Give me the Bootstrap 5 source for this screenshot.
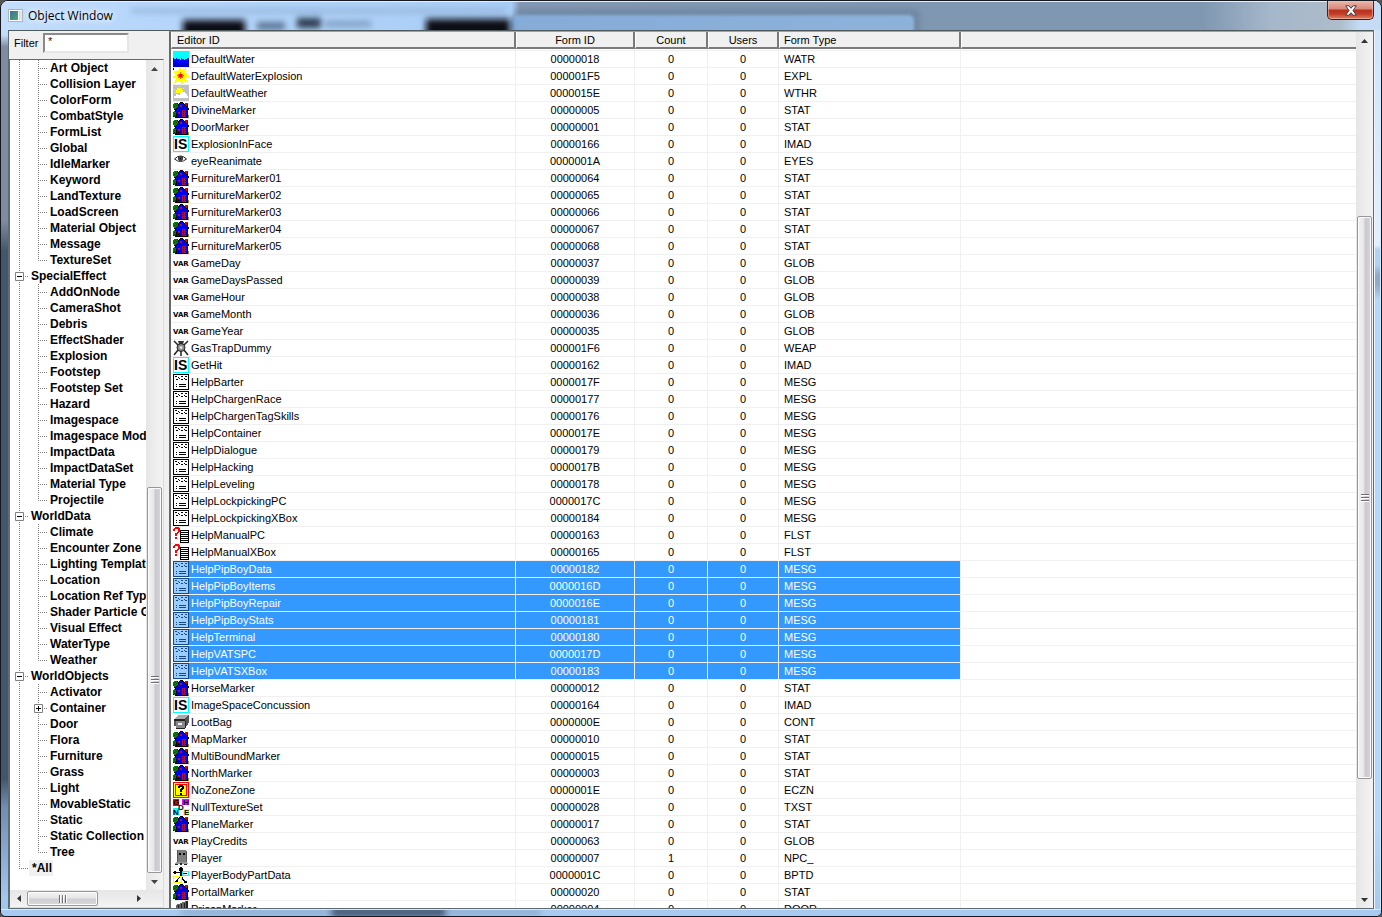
<!DOCTYPE html>
<html lang="en">
<head>
<meta charset="utf-8">
<meta name="viewport" content="width=device-width, initial-scale=1">
<title>Object Window</title>
<link href="https://cdn.jsdelivr.net/npm/bootstrap@5.3.0/dist/css/bootstrap.min.css" rel="stylesheet">
<style>
  :root { --face:#f0f0f0; --line:#f0f0f0; --sel:#3399ff; }
  body { background:#555; font:11px/16px "Liberation Sans", Arial, sans-serif; color:#000; overflow:hidden; }
  .win { border:1px solid #15181f; border-radius:8px 8px 6px 6px; padding:0 7px 7px; overflow:hidden; position:relative;
    background:linear-gradient(to bottom, #c3ddf9 0 34px, #7e8ba0 46px 220px, #44566c 250px 85%, #6e8db0 88%, #a3c6ec 98%); }
  .glass { left:0; width:100%; pointer-events:none; }
  .glass-top { top:0; height:29px; }
  .glass-bottom { bottom:0; height:7px; }
  .edge-right { right:0; top:29px; bottom:0; width:7px; border-left:1px solid #eef6ff; border-right:1px solid #d5eaff;
    background:linear-gradient(#cfe4fb 0, #e4effb 215px, #b0d0f4 220px 235px, #8fabc9 245px 255px, #b5d7fb 270px, #b5d7fb 90%, #a6c8ea); }
  .titlebar { height:29px; }
  .titlebar h1 { font:12px/14px "Open Sans", "Noto Sans", sans-serif; text-shadow:0 0 6px #fff, 0 0 8px #fff; }
  .close-btn { width:47px; height:19px; border:1px solid #4a1a1c; border-top:0; border-radius:0 0 5px 5px; padding:0;
    background:linear-gradient(#eab6aa 0, #d98878 8px, #b8301f 9px, #c43d25 13px, #dd8463); box-shadow:inset 0 0 0 1px #f3c9be88; }
  .client { border:1px solid #5f6b73; border-top-color:#4f5a5c; background:var(--face); }
  .side { width:160px; }
  .filter-row { height:28px; padding:2px 0 0 5px; }
  .filter-row label { width:29px; margin-top:2px; }
  .filter-row input { width:86px; height:20px; padding:0 3px 4px; border:2px solid; border-color:#8a8a8a #e6e6e6 #e6e6e6 #8a8a8a; border-radius:0;
    font:inherit; line-height:12px; background:#fff; min-height:0; }
  .tree-box { width:155px; border:1px solid; border-color:#696969 #dcdcdc #dcdcdc #696969; background:#fff; }
  .tree { font:bold 12px/16px "Liberation Sans", Arial, sans-serif; }
  .tree li { height:16px; white-space:nowrap; }
  .tree a { color:#000; text-decoration:none; }
  .cellv { flex:none; height:16px; background-repeat:no-repeat; --d:#808080 0 1px, transparent 1px 2px; }
  .lv1 { width:19px; }
  .lv2 { width:21px; }
  .bar-v { background-image:repeating-linear-gradient(to bottom, var(--d)); background-position:9px 0; background-size:1px 16px; }
  .bar-t { background-image:repeating-linear-gradient(to bottom, var(--d)), repeating-linear-gradient(to right, var(--d));
    background-position:9px 0, 9px 8px; background-size:1px 16px, 9px 1px; }
  .bar-e { background-image:repeating-linear-gradient(to bottom, var(--d)), repeating-linear-gradient(to right, var(--d));
    background-position:9px 0, 9px 8px; background-size:1px 8px, 9px 1px; }
  .twist { display:block; width:9px; height:9px; margin:4px 0 0 5px; padding:0; border:0; background:#fff; line-height:0; }
  .all-item { background:var(--face); padding:0 1px 0 3px; }
  .head-label { padding-left:2px; }
  .sb { background:linear-gradient(to right, #e6e6e6, #f3f3f3); flex:none; }
  .sb-v { width:17px; }
  .sb-h { height:17px; background:linear-gradient(#e6e6e6, #f3f3f3); }
  .sb button { border:0; padding:0; background:none; width:17px; height:17px; line-height:0; flex:none; }
  .thumb { border:1px solid #979797; border-radius:2px; box-shadow:inset 0 0 0 1px #fbfbfb; }
  .sb-v .thumb { width:15px; background:linear-gradient(to right, #f3f3f3 0, #e6e6e8 45%, #c9c9cd 55%, #d6d6da); }
  .sb-h .thumb { height:15px; background:linear-gradient(#f3f3f3 0, #e6e6e8 45%, #cfcfd2 55%, #dadadd); width:71px; }
  .grip { width:8px; height:8px; background:repeating-linear-gradient(#6f6f74 0 1px, #fff 1px 2px, transparent 2px 3px); }
  .sb-h .grip { background:repeating-linear-gradient(to right, #6f6f74 0 1px, #fff 1px 2px, transparent 2px 3px); }
  .list-box { border-left:2px solid #696969; border-top:1px solid #a0a0a0; background:#fff; }
  .objects { table-layout:fixed; border-collapse:separate; border-spacing:0; color:#000; font-size:11px; }
  .objects.table > thead > tr > th { height:17px; padding:0 0 0 5px; line-height:14px; padding-top:1px; font-weight:400; background:var(--face); vertical-align:top; box-shadow:none;
    border:solid; border-width:0 2px 2px 1px; border-color:#fff #7a7a7a #7a7a7a #fff; }
  .objects.table > thead > tr > th.text-center { padding-left:0; }
  .objects.table > thead > tr > th.kind-head { padding-left:4px; }
  .objects.table > tbody > tr > td { height:17px; padding:0; line-height:16px; border:0 solid var(--line); border-width:0 1px 1px 0; white-space:nowrap; box-shadow:none; background:#fff; vertical-align:top; color:#000; }
  .objects.table > tbody > tr > td:last-child, .objects.table > thead > tr > th:last-child { border-right:0; }
  .objects.table > tbody > tr > td.kind { padding-left:5px; }
  .objects.table > tbody > tr.sliver > td { height:2px; line-height:0; }
  .objects.table > tbody > tr.picked > td { background:var(--sel); color:#fff; }
  .objects.table > tbody > tr.picked > td:first-child { background:linear-gradient(to right, #fff 2px, var(--sel) 2px); }
  .objects.table > tbody > tr.picked > td:last-child { background:#fff; }
  .objects .ico { width:16px; height:16px; margin:0 2px; flex:none; }
  .objects .name { height:16px; }
  .now-focused .name > span { flex:1; background:repeating-linear-gradient(to right, #cc6600 0 1px, transparent 1px 2px) 0 0 / 100% 1px no-repeat; }
  svg { display:block; }
  svg text { font-family:"Liberation Sans", Arial, sans-serif; font-weight:700; }
  svg .wide { font-family:"DejaVu Sans", sans-serif; }
</style>
</head>
<body>
<div class="win vh-100 d-flex flex-column">
  <svg class="glass glass-top position-absolute" viewBox="0 0 1380 29" preserveAspectRatio="none" aria-hidden="true">
    <defs>
      <filter id="soft" x="-20%" y="-60%" width="140%" height="220%"><feGaussianBlur stdDeviation="3"/></filter>
      <filter id="haze" x="-20%" y="-60%" width="140%" height="220%"><feGaussianBlur stdDeviation="1.500"/></filter>
      <linearGradient id="sky"><stop offset="0" stop-color="#c4defa"/><stop offset=".1" stop-color="#b6d6fa"/><stop offset=".37" stop-color="#a9cdf6"/><stop offset=".376" stop-color="#8498b2"/><stop offset=".65" stop-color="#7f97b1"/><stop offset=".87" stop-color="#7f97b1"/><stop offset=".92" stop-color="#a5b7ca"/><stop offset=".97" stop-color="#aebccb"/><stop offset=".985" stop-color="#c4dcf5"/></linearGradient>
      <linearGradient id="pane"><stop offset="0" stop-color="#84acd8"/><stop offset="1" stop-color="#8db2da"/></linearGradient>
    </defs>
    <rect width="1380" height="29" fill="url(#sky)"/>
    <g filter="url(#soft)">
      <rect x="130" y="8" width="375" height="4" fill="#93b2d8"/>
      <rect x="514" y="8" width="405" height="34" rx="6" fill="#6f87a3"/>
    </g>
    <rect x="510" y="14" width="403" height="28" rx="5" fill="url(#pane)" filter="url(#haze)"/>
    <g filter="url(#soft)">
      <rect x="182" y="19" width="62" height="20" fill="#0b1017"/>
      <rect x="425" y="18" width="84" height="20" fill="#0b1017"/>
      <rect x="256" y="21" width="28" height="8" fill="#5b7594"/>
      <rect x="296" y="17" width="24" height="10" fill="#2c3b4e"/>
      <rect x="324" y="20" width="46" height="6" fill="#7f9cc0"/>
    </g>
    <path d="M0 .5H1380" stroke="#e4f0fc"/>
  </svg>
  <div class="edge-right position-absolute"></div>
  <svg class="glass glass-bottom position-absolute" viewBox="0 0 1380 7" preserveAspectRatio="none" aria-hidden="true">
    <rect width="1380" height="7" fill="#a9caf0"/>
    <g filter="url(#soft)"><rect x="180" y="0" width="360" height="7" fill="#8fadd2"/><rect x="330" y="-3" width="115" height="12" fill="#4a5f7b"/></g>
    <path d="M0 .5H1380" stroke="#d8e9fb"/>
  </svg>

  <header class="titlebar d-flex align-items-start position-relative flex-shrink-0">
    <svg class="mt-2" width="16" height="13" viewBox="0 0 16 13" aria-hidden="true">
      <defs><linearGradient id="scr" x1="0" y1="0" x2="1" y2="1"><stop offset="0" stop-color="#3a6f9e"/><stop offset="1" stop-color="#4fa86a"/></linearGradient></defs>
      <rect x=".5" y=".5" width="14" height="12" fill="#fff" stroke="#a9b4bd"/><rect x="2" y="2" width="8" height="9" fill="url(#scr)"/><path d="M11.500 2V11M13 2V11" stroke="#c9d2da"/>
    </svg>
    <h1 class="m-0 mt-2 ms-1 flex-grow-1">Object Window</h1>
    <button class="close-btn" type="button" aria-label="Close">
      <svg class="mx-auto" width="12" height="11" viewBox="0 0 12 11"><path d="M.7.8H4L6 3.300 8 .8H11.300L8 5.500 11.300 10.200H8L6 7.700 4 10.200H.7L4 5.500Z" fill="#fff" stroke="#4b3a45"/></svg>
    </button>
  </header>

  <main class="client d-flex flex-grow-1 position-relative overflow-hidden">
    <aside class="side d-flex flex-column flex-shrink-0">
      <div class="filter-row d-flex align-items-start flex-shrink-0">
        <label for="filter">Filter</label>
        <input class="form-control" id="filter" type="text" value="*">
      </div>
      <div class="tree-box d-flex flex-column flex-grow-1 overflow-hidden">
        <div class="d-flex flex-grow-1 overflow-hidden">
          <ul class="tree list-unstyled mb-0 flex-grow-1 overflow-hidden" id="tree"></ul>
          <div class="sb sb-v d-flex flex-column align-items-center">
            <button type="button" aria-label="Scroll tree up"><svg class="m-auto" width="7" height="4"><path d="M0 4L3.500 0 7 4Z" fill="#444"/></svg></button>
            <div style="flex-grow:414"></div>
            <div class="thumb d-flex align-items-center justify-content-center" style="flex-grow:379"><span class="grip"></span></div>
            <div></div>
            <button type="button" aria-label="Scroll tree down"><svg class="m-auto" width="7" height="4"><path d="M0 0H7L3.500 4Z" fill="#444"/></svg></button>
          </div>
        </div>
        <div class="sb sb-h d-flex align-items-center">
          <button type="button" aria-label="Scroll tree left"><svg class="m-auto" width="4" height="7"><path d="M4 0V7L0 3.500Z" fill="#333"/></svg></button>
          <div class="thumb d-flex align-items-center justify-content-center"><span class="grip"></span></div>
          <div class="flex-grow-1"></div>
          <button type="button" aria-label="Scroll tree right"><svg class="m-auto" width="4" height="7"><path d="M0 0V7L4 3.500Z" fill="#333"/></svg></button>
          <div class="pe-3"></div>
        </div>
      </div>
    </aside>

    <section class="list-box d-flex flex-grow-1 overflow-hidden">
      <div class="flex-grow-1 overflow-hidden">
        <table class="table objects mb-0 w-100">
          <colgroup><col style="width:345px"><col style="width:119px"><col style="width:73px"><col style="width:71px"><col style="width:182px"><col></colgroup>
          <thead><tr><th scope="col">Editor ID</th><th scope="col" class="text-center">Form ID</th><th scope="col" class="text-center">Count</th><th scope="col" class="text-center">Users</th><th scope="col" class="kind-head">Form Type</th><th aria-hidden="true"></th></tr></thead>
          <tbody id="rows"></tbody>
        </table>
      </div>
      <div class="sb sb-v d-flex flex-column align-items-center">
        <button type="button" aria-label="Scroll list up"><svg class="m-auto" width="7" height="4"><path d="M0 4L3.500 0 7 4Z" fill="#333"/></svg></button>
        <div style="flex-grow:169"></div>
        <div class="thumb d-flex align-items-center justify-content-center" style="flex-grow:559"><span class="grip"></span></div>
        <div style="flex-grow:113"></div>
        <button type="button" aria-label="Scroll list down"><svg class="m-auto" width="7" height="4"><path d="M0 0H7L3.500 4Z" fill="#333"/></svg></button>
      </div>
    </section>
  </main>
</div>

<script>
  // Category tree: each group lists its children, "+" marks a collapsed child
  const groups = [
    ['', 'Art Object|Collision Layer|ColorForm|CombatStyle|FormList|Global|IdleMarker|Keyword|LandTexture|LoadScreen|Material Object|Message|TextureSet'],
    ['SpecialEffect', 'AddOnNode|CameraShot|Debris|EffectShader|Explosion|Footstep|Footstep Set|Hazard|Imagespace|Imagespace Modifier|ImpactData|ImpactDataSet|Material Type|Projectile'],
    ['WorldData', 'Climate|Encounter Zone|Lighting Template|Location|Location Ref Type|Shader Particle Geometry|Visual Effect|WaterType|Weather'],
    ['WorldObjects', 'Activator|+Container|Door|Flora|Furniture|Grass|Light|MovableStatic|Static|Static Collection|Tree']
  ];
  const twist = open => `<button class="twist" type="button" aria-label="${open ? 'Collapse' : 'Expand'}"><svg width="9" height="9"><path d="M.5.5H8.500V8.500H.5Z" fill="#fff" stroke="#808080"/><path d="M2 4.500H7${open ? '' : 'M4.500 2V7'}" stroke="#000"/></svg></button>`;
  let tree = '';
  for (const [title, kids] of groups) {
    if (title) tree += `<li class="d-flex"><span class="cellv lv1 bar-t">${twist(true)}</span><a href="#" class="head-label">${title}</a></li>`;
    kids.split('|').forEach((kid, i, all) => {
      const shut = kid[0] === '+', end = i === all.length - 1;
      tree += `<li class="d-flex"><span class="cellv lv1 bar-v"></span><span class="cellv lv2 ${end ? 'bar-e' : 'bar-t'}">${shut ? twist(false) : ''}</span><a href="#">${kid.replace('+', '')}</a></li>`;
    });
  }
  tree += '<li class="d-flex"><span class="cellv lv1 bar-e"></span><a href="#" class="all-item">*All</a></li>';
  document.getElementById('tree').innerHTML = tree;

  // Turns rows of colour letters into 1 x 1 cells
  const palette = { k: '#000', g: '#008000', G: '#064a06', b: '#0000f0', r: '#e00000', m: '#a8103c', y: '#a09000' };
  const pixels = rows => rows.flatMap((row, y) => [...row].map((c, x) => c === '.' ? '' : `<path d="M${x} ${y}h1v1h-1Z" fill="${palette[c]}"/>`)).join('');

  // 16 x 16 type icons
  const note = (ink, paper) => `<path d="M.5.500H15.500V15.500H.5Z" fill="${paper}" stroke="${ink}"/><path d="M2 2.500H4M5 3.500H6M8 2.500H10M12 2.500H14M3 5.500H5M6 4.500H7M8 5.500H10M11 4.500H12M12 5.500H14M3 10.500H4M6 10.500H13M3 12.500H4M6 12.500H13" stroke="${ink}"/>`;
  const icons = {
    water: '<path d="M0 0H16V16H0Z" fill="#0ff"/><path d="M0 7H1V8H3V7H4V8H7V9H8V7H9V8H11V9H12V8H14V7H16V16H0Z" fill="#00f"/><path d="M0 12H16V16H0Z" fill="#0000d0"/>',
    burst: '<path d="M0 0H1V2H0Z"/><path d="M7 0L8 4 12 1 11 5 15 5 12 7 16 9 12 10 14 14 10 12 9 16 7 12 2 14 4 10 0 9 4 7 1 3 5 4Z" fill="#ff0" stroke="#ff0"/><path d="M7 4H8V6H10V7H11V8H10V10H8V11H7V10H5V8H4V7H5V6H7Z" fill="#f60"/><path d="M6 6H9V9H6Z" fill="#f00"/>',
    cloud: '<path d="M0 0H16V16H0Z" fill="#c0c0c0"/><path d="M4 3H9V5H10V8H3V5H4Z" fill="#ff0"/><path d="M1 13V11H3V9H5V10H7V8H8V7H12V8H13V9H14V11H15V13Z" fill="#fff"/><path d="M1 4H2V5H1ZM6 1H7V2H6ZM2 7H3V8H2ZM10 3H11V4H10Z" fill="#ff0"/>',
    house: pixels([
      '.......kkk......',
      '.gggk.kbbbk.rrr.',
      'ggGggkbbbbbkrrk.',
      'gggGgkbmmbbbkrk.',
      'gGgggbbmmbbbbkk.',
      'ggggkbbbbbbbbbk.',
      '.ggkbbbbbbbbbbbk',
      '.kkbbbbbbbbbbbkk',
      '..kbbbbbbmmmmbk.',
      '.gkbbbbbbmkmkbk.',
      'gggbbmmbbmmmmbk.',
      'gGgkbmmbbmkmkbk.',
      'gggkbbbbbmmmmbk.',
      'gGGkbkkbbmkmkbky',
      'kgkkbbbbbmmmmbky',
      '..kkkkkkkkkkkkky']),
    is: '<path d="M.5.500H15.500V15.500H.5Z" fill="#fff" stroke="#0ff"/><text x="1" y="13" font-size="14">IS</text>',
    eye: '<path d="M1.500 6Q7.500 0 13.500 6Q7.500 11 1.500 6Z" fill="#fff" stroke="#222" shape-rendering="auto"/><circle cx="7.500" cy="5.500" r="2.500" fill="#444"/><path d="M7 5H8V6H7Z"/>',
    glob: '<text class="wide" x="0" y="11" font-size="7">VAR</text>',
    trap: '<g shape-rendering="auto"><path d="M1 1L5 5M15 1L11 5M5 10L1 15M11 10L15 15M8 10V16" stroke="#222" stroke-width="1.500"/><path d="M5 1H11L10 4H6Z" fill="#333"/><circle cx="8" cy="7.500" r="4" fill="#888" stroke="#222"/><circle cx="8" cy="7.500" r="1.500" fill="#ddd"/></g>',
    mesg: note('#000', '#fff'),
    mesgOn: note('#17497e', '#99ccff'),
    flst: '<path d="M0 2H1V1H2V0H6V1H7V5H6V6H5V7H4V9H2V6H4V5H5V2H2V4H0ZM2 10H4V12H2Z" fill="#f00"/><path d="M7.500 3.500H15.500V15.500H7.500Z" fill="#fff" stroke="#000"/><path d="M8 5.500H15M8 7.500H15M8 9.500H15M8 11.500H15M8 13.500H15" stroke="#000"/>',
    cont: '<path d="M1 5L5 1H16V8L12 15H3V12H1Z" fill="#555"/><path d="M1 5L5 1H15L12 5Z" fill="#aaa"/><path d="M3 7H12V14H3Z" fill="#888"/><path d="M1 5H12V7H1ZM12 7H13V14H12ZM3 14H12V15H3Z" fill="#222"/><path d="M5 9H9V11H5Z" fill="#eee"/>',
    zone: '<path d="M.5.500H15.500V15.500H.5Z" fill="#ff0" stroke="#f00"/><path d="M2.500 2.500H13.500V13.500H2.500Z" fill="#ff0" stroke="#f00"/><path d="M5 4H6V3H10V4H11V7H10V8H9V10H7V7H8V6H9V5H7V6H5ZM7 11H9V13H7Z"/>',
    txst: '<path d="M0 0H6V7H0Z" fill="#f00"/><path d="M9 0H16V6H9Z" fill="#f0f"/><path d="M0 9H6V16H0Z" fill="#0ff"/><path d="M10 10H16V16H10Z" fill="#ff0"/><g font-size="8"><text x="0" y="6">G</text><text x="10" y="6">H</text><text x="5" y="11">D</text><text x="0" y="16">N</text><text x="11" y="16">E</text></g>',
    npc: '<path d="M4 0H13V12H4Z" fill="#808080"/><path d="M13 1H14V12H13ZM4 0H5V12H4Z" fill="#555"/><path d="M6 3H8V5H6ZM10 3H12V5H10Z"/><path d="M3 12H14V13H15V14H2V13H3Z" fill="#999"/><path d="M2 14H5V15H2ZM7 13H9V15H7ZM11 14H14V15H11Z" fill="#222"/>',
    body: '<circle cx="8" cy="2.500" r="2.300"/><path d="M0 5.500H9M8 4V10M8 9L12 15H14M8 9L4 13V15H2M2 4V7" stroke="#000" stroke-width="1.400" fill="none"/><path d="M9.500 4.500H15.500V8.500H9.500Z" fill="#fff" stroke="#0ff"/><path d="M10 6.500H14" stroke="#000"/><path d="M.5 9.500H8.500V15.500H.5Z" fill="none" stroke="#ff0"/>',
    door: '<path d="M3 4L13 0V16H3Z" fill="#666"/><path d="M13 0H15V16H13Z" fill="#222"/><path d="M5 4V16M8 3V16M11 2V16" stroke="#222"/>'
  };

  // icon, editor id, form id, count, form type
  const data = `water DefaultWater 00000018 0 WATR
burst DefaultWaterExplosion 000001F5 0 EXPL
cloud DefaultWeather 0000015E 0 WTHR
house DivineMarker 00000005 0 STAT
house DoorMarker 00000001 0 STAT
is ExplosionInFace 00000166 0 IMAD
eye eyeReanimate 0000001A 0 EYES
house FurnitureMarker01 00000064 0 STAT
house FurnitureMarker02 00000065 0 STAT
house FurnitureMarker03 00000066 0 STAT
house FurnitureMarker04 00000067 0 STAT
house FurnitureMarker05 00000068 0 STAT
glob GameDay 00000037 0 GLOB
glob GameDaysPassed 00000039 0 GLOB
glob GameHour 00000038 0 GLOB
glob GameMonth 00000036 0 GLOB
glob GameYear 00000035 0 GLOB
trap GasTrapDummy 000001F6 0 WEAP
is GetHit 00000162 0 IMAD
mesg HelpBarter 0000017F 0 MESG
mesg HelpChargenRace 00000177 0 MESG
mesg HelpChargenTagSkills 00000176 0 MESG
mesg HelpContainer 0000017E 0 MESG
mesg HelpDialogue 00000179 0 MESG
mesg HelpHacking 0000017B 0 MESG
mesg HelpLeveling 00000178 0 MESG
mesg HelpLockpickingPC 0000017C 0 MESG
mesg HelpLockpickingXBox 00000184 0 MESG
flst HelpManualPC 00000163 0 FLST
flst HelpManualXBox 00000165 0 FLST
mesgOn HelpPipBoyData 00000182 0 MESG
mesgOn HelpPipBoyItems 0000016D 0 MESG
mesgOn HelpPipBoyRepair 0000016E 0 MESG
mesgOn HelpPipBoyStats 00000181 0 MESG
mesgOn HelpTerminal 00000180 0 MESG
mesgOn HelpVATSPC 0000017D 0 MESG
mesgOn HelpVATSXBox 00000183 0 MESG
house HorseMarker 00000012 0 STAT
is ImageSpaceConcussion 00000164 0 IMAD
cont LootBag 0000000E 0 CONT
house MapMarker 00000010 0 STAT
house MultiBoundMarker 00000015 0 STAT
house NorthMarker 00000003 0 STAT
zone NoZoneZone 0000001E 0 ECZN
txst NullTextureSet 00000028 0 TXST
house PlaneMarker 00000017 0 STAT
glob PlayCredits 00000063 0 GLOB
npc Player 00000007 1 NPC_
body PlayerBodyPartData 0000001C 0 BPTD
house PortalMarker 00000020 0 STAT
door PrisonMarker 00000004 0 DOOR`.split('\n').map(r => r.split(' '));
  document.getElementById('rows').innerHTML =
    '<tr class="sliver" aria-hidden="true">' + '<td></td>'.repeat(6) + '</tr>' +
    data.map(([icon, name, id, count, kind]) => {
      const cls = icon === 'mesgOn' ? 'picked' + (name === 'HelpVATSXBox' ? ' now-focused' : '') : '';
      return `<tr class="${cls}"><td><div class="name d-flex"><svg class="ico" viewBox="0 0 16 16" shape-rendering="crispEdges" aria-hidden="true">${icons[icon]}</svg><span>${name}</span></div></td><td class="text-center">${id}</td><td class="text-center">${count}</td><td class="text-center">0</td><td class="kind">${kind}</td><td></td></tr>`;
    }).join('');
</script>
<script src="https://cdn.jsdelivr.net/npm/bootstrap@5.3.0/dist/js/bootstrap.bundle.min.js"></script>
</body>
</html>
